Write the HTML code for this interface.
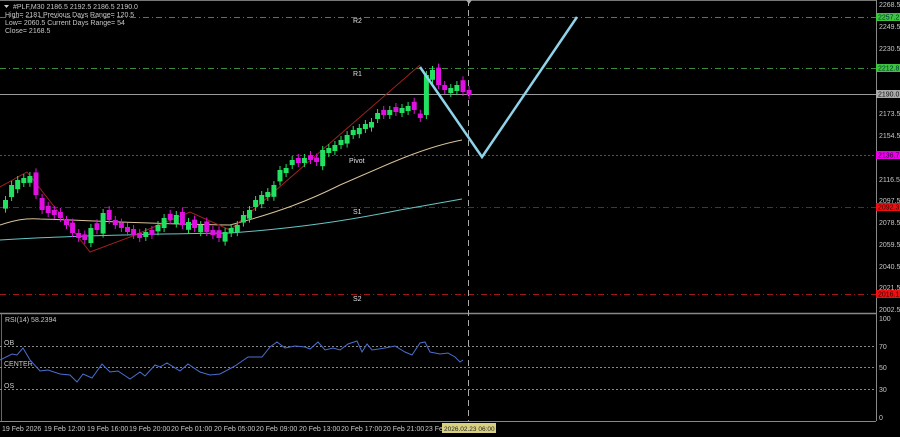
<!DOCTYPE html>
<html><head><meta charset="utf-8"><style>
html,body{margin:0;padding:0;background:#000;width:900px;height:437px;overflow:hidden}
svg{display:block}
text{font-family:"Liberation Sans",sans-serif;font-size:7px}
</style></head><body>
<svg id="s" width="900" height="437" viewBox="0 0 900 437" xmlns="http://www.w3.org/2000/svg">
<rect width="900" height="437" fill="#000"/>
<line x1="0" y1="0.5" x2="876" y2="0.5" stroke="#777"/>
<line x1="876.5" y1="0" x2="876.5" y2="421" stroke="#888"/>
<line x1="0" y1="313.5" x2="876" y2="313.5" stroke="#888" stroke-width="1.5"/>
<line x1="0" y1="421.5" x2="876" y2="421.5" stroke="#888"/>
<line x1="1.5" y1="314" x2="1.5" y2="421" stroke="#666"/>
<g stroke-dasharray="6,3,1,3" stroke-width="1">
<line x1="0" y1="17.5" x2="876" y2="17.5" stroke="#3c8a3c"/>
<line x1="0" y1="68.5" x2="876" y2="68.5" stroke="#3c8a3c"/>
<line x1="0" y1="207.5" x2="876" y2="207.5" stroke="#8a1a1a"/>
<line x1="0" y1="294.5" x2="876" y2="294.5" stroke="#a01818"/>
</g>
<line x1="0" y1="155.5" x2="876" y2="155.5" stroke="#8a2a8a" stroke-dasharray="2,2"/>
<line x1="0" y1="94.5" x2="876" y2="94.5" stroke="#9a9a9a"/>
<line x1="468.5" y1="0" x2="468.5" y2="421" stroke="#aaa" stroke-dasharray="6,4"/>
<polygon points="466,0 472,0 469,4" fill="#aaa"/>
<g fill="#e0e0e0">
<text x="353" y="23">R2</text>
<text x="353" y="76">R1</text>
<text x="349" y="163">Pivot</text>
<text x="353" y="214">S1</text>
<text x="353" y="301">S2</text>
</g>
<path d="M0,225 C15,220 25,218 40,219 C80,220 150,224 230,225 C280,212 310,200 340,185 C380,168 420,148 462,140" fill="none" stroke="#d8c39a" stroke-width="1"/>
<path d="M0,240 C60,236 150,234 230,233 C300,228 350,220 400,210 L462,199" fill="none" stroke="#66c6c6" stroke-width="1"/>
<polyline points="0,187 27,172 90,252 130,237 190,212 230,230 420,65" fill="none" stroke="#a02020" stroke-width="1"/>
<g id="c"></g>
<polyline points="420,67 482,157 577,17" fill="none" stroke="#8fd3ea" stroke-width="2.5"/>
<polygon points="4,5 9,5 6.5,8" fill="#ccc"/>
<g fill="#c8c8c8">
<text x="13" y="9">#PLF,M30  2186.5 2192.5 2186.5 2190.0</text>
<text x="5" y="17">High= 2181    Previous Days Range= 120.5</text>
<text x="5" y="25">Low= 2060.5    Current Days Range= 54</text>
<text x="5" y="33">Close= 2168.5</text>
<text x="879" y="7">2268.5</text>
<text x="879" y="29">2249.5</text>
<text x="879" y="51">2230.5</text>
<text x="879" y="116">2173.5</text>
<text x="879" y="138">2154.5</text>
<text x="879" y="182">2116.5</text>
<text x="879" y="203">2097.5</text>
<text x="879" y="225">2078.5</text>
<text x="879" y="247">2059.5</text>
<text x="879" y="269">2040.5</text>
<text x="879" y="290">2021.5</text>
<text x="879" y="312">2002.5</text>
<text x="5" y="322">RSI(14) 58.2394</text>
<text x="4" y="345">OB</text>
<text x="4" y="366">CENTER</text>
<text x="4" y="388">OS</text>
<text x="879" y="321">100</text><text x="879" y="349">70</text><text x="879" y="370">50</text><text x="879" y="392">30</text><text x="879" y="420">0</text>
</g>
<rect x="876" y="13" width="24" height="8" fill="#3cc43c"/><text x="878" y="19.5" fill="#033">2257.2</text>
<rect x="876" y="64" width="24" height="8" fill="#3cc43c"/><text x="878" y="70.5" fill="#033">2212.8</text>
<rect x="876" y="90" width="24" height="8" fill="#aaa"/><text x="878" y="96.5" fill="#111">2190.0</text>
<rect x="876" y="151" width="24" height="8" fill="#ee00ee"/><text x="878" y="157.5" fill="#303">2136.7</text>
<rect x="876" y="203" width="24" height="8" fill="#ee1010"/><text x="878" y="209.5" fill="#300">2092.3</text>
<rect x="876" y="290" width="24" height="8" fill="#ee1010"/><text x="878" y="296.5" fill="#300">2016.1</text>
<g stroke="#888" stroke-dasharray="2,2">
<line x1="0" y1="346.5" x2="876" y2="346.5"/>
<line x1="0" y1="367.5" x2="876" y2="367.5"/>
<line x1="0" y1="389.5" x2="876" y2="389.5"/>
</g>
<polyline fill="none" stroke="#4a6fd0" stroke-width="1" points="0,360 12,354 17,355 23,348 30,360 40,371 48,370 60,374 70,375 77,382 83,374 92,378 102,364 110,372 118,371 130,379 140,372 145,376 155,365 160,367 167,363 180,371 188,364 200,372 210,375 220,374 235,366 248,357 255,357 262,357 270,347 277,342 285,348 295,346 305,347 310,349 318,342 325,350 333,348 340,350 348,344 357,341 362,352 367,344 372,350 385,348 395,346 405,352 412,355 420,343 425,342 430,352 440,354 448,353 455,357 460,362 463,360"/>
<g font-size="6" fill="#c8c8c8">
<text x="2" y="431" font-size="6">19 Feb 2026</text>
<text x="44" y="431">19 Feb 12:00</text>
<text x="87" y="431">19 Feb 16:00</text>
<text x="129" y="431">19 Feb 20:00</text>
<text x="171" y="431">20 Feb 01:00</text>
<text x="214" y="431">20 Feb 05:00</text>
<text x="256" y="431">20 Feb 09:00</text>
<text x="299" y="431">20 Feb 13:00</text>
<text x="341" y="431">20 Feb 17:00</text>
<text x="383" y="431">20 Feb 21:00</text>
<text x="425" y="431">23 Fe</text>
</g>
<rect x="442" y="423" width="54" height="10" fill="#d8d080"/>
<text x="444" y="431" fill="#222" style="font-size:6.5px">2026.02.23 06:00</text>
</svg>
<script>
var ys=[200,185,180,178,176,195,210,213,215,218,225,233,238,240,228,230,213,220,225,228,232,235,238,232,235,225,218,220,215,225,222,228,225,232,235,238,232,228,225,215,210,200,195,192,185,170,168,160,163,158,160,162,150,148,145,140,135,130,128,124,122,113,115,110,112,108,106,110,118,75,70,85,90,88,85,92,95];
var nz=[6,-5,7,-4,8,-6,5,-7,6,-5,8,-4,7,-6,5,-8,6,-5,7,-4];
var g=document.getElementById('c'),h='',prev=205;
for(var i=0;i<ys.length;i++){var x=5+i*6.1,c=ys[i],o=prev+nz[i%nz.length]*0.6;
if(Math.abs(o-c)<4){o=c+(i%2?5:-5);}
var up=c<o;
var t=Math.min(o,c),b=Math.max(o,c);
var col=up?'#22e060':'#e010e0';
h+='<line x1="'+(x+0.5)+'" y1="'+(t-4)+'" x2="'+(x+0.5)+'" y2="'+(b+4)+'" stroke="'+col+'"/>';
h+='<rect x="'+(x-2)+'" y="'+t+'" width="5" height="'+(b-t)+'" fill="'+col+'"/>';prev=c;}
g.innerHTML=h;
</script>
</body></html>
